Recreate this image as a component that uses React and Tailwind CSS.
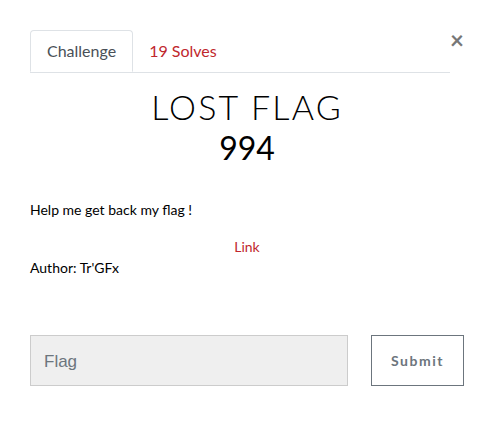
import React, { useState } from "react";

export default function App() {
    const [flag, setFlag] = useState("");

    return (
        <div className="relative w-[489px] h-[431px] bg-white font-['Lato','Liberation_Sans',sans-serif] text-[#212529]">
            {/* close */}
            <button className="absolute left-[446px] top-[28px] text-[24px] leading-none font-bold text-[#777] px-1">
                ×
            </button>

            <div className="pt-[30px] pl-[30px] pr-[39px]">
                {/* tabs */}
                <div className="flex border-b border-[#dee2e6]">
                    <div className="-mb-px h-[42px] px-[16px] flex items-center border border-[#dee2e6] border-b-white rounded-t-[4px] bg-white text-[16px] text-[#495057]">
                        Challenge
                    </div>
                    <div className="h-[42px] px-[16px] flex items-center text-[16px] text-[#c0272d]">
                        19 Solves
                    </div>
                </div>

                <div className="flex flex-col items-center mt-[14px] -mr-[14px]">
                    <h3 className="text-[34px] leading-[40px] font-light tracking-[2.2px] text-black">LOST FLAG</h3>
                    <h4 className="mt-[3px] text-[32px] leading-[36px] font-normal text-black">994</h4>
                </div>

                <div className="mt-[34px] text-[14px] leading-[20px] text-black">
                    <p>Help me get back my flag !</p>
                    <p className="mt-[17px] text-center pl-[14px]">
                        <a className="text-[#c0272d]">Link</a>
                    </p>
                    <p className="mt-[1px]">Author: Tr'GFx</p>
                </div>
            </div>

            <div className="flex pl-[30px] mt-[57px] gap-[23px]">
                <input
                    value={flag}
                    onChange={e => setFlag(e.target.value)}
                    placeholder="Flag"
                    className="w-[318px] h-[51px] bg-[#efefef] border border-[#ccc] px-[13px] pt-[3px] text-[17px] font-['Liberation_Sans',sans-serif] placeholder-[#6c757d] outline-none"
                />
                <button className="w-[93px] h-[51px] border border-[#6c757d] bg-white text-[14px] font-bold tracking-[1.5px] text-[#6c757d]">
                    Submit
                </button>
            </div>
        </div>
    );
}
